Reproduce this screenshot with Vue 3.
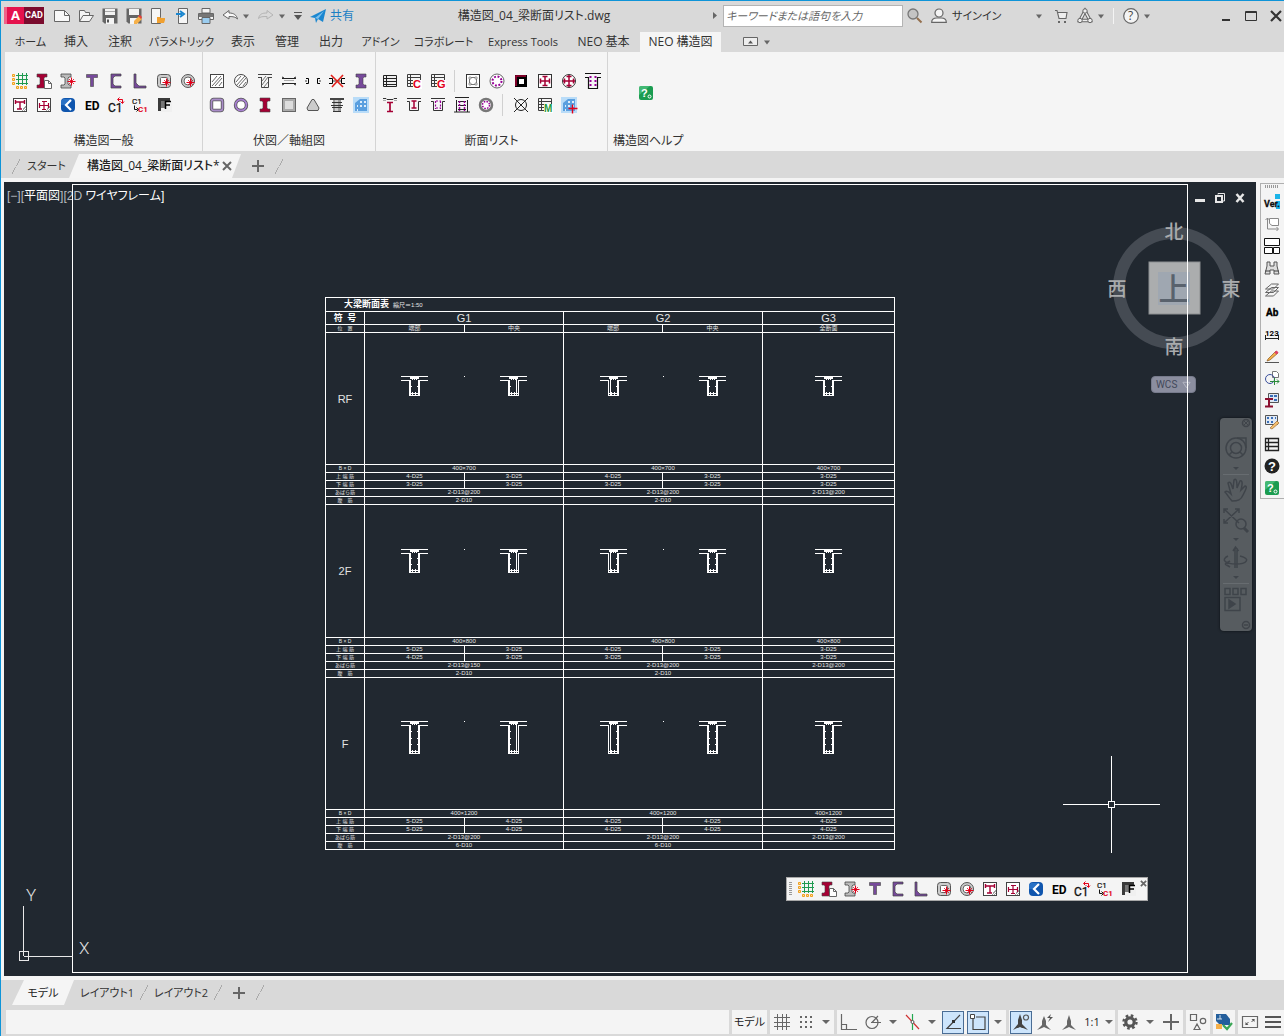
<script setup>
import { ref } from 'vue'

const M = '#a50034'
const P = '#76499a'

const steel = (c) => `<path d="M3 1h10v3h-2l-1 1v6l1 1h2v3H3v-3h2l1-1V5L5 4H3z" fill="${c}" stroke="#444" stroke-width=".6"/>`
const star = (x, y) => `<path d="M${x - 4} ${y}h8M${x} ${y - 4}v8" stroke="#e2001a"/><path d="M${x - 2.5} ${y - 2.5}l5 5M${x + 2.5} ${y - 2.5}l-5 5" stroke="#e2001a" stroke-width=".8"/>`
const listBase = '<path d="M1.5 1.5h13v12h-13zM1.5 4.5h13M1.5 7.5h13M1.5 10.5h13M4.5 1.5v12" fill="none" stroke="#3c3c3c"/>'
const hatch = '<path d="M3 9l5-6M3 13l9-10M6 13l7-8M10 13l3-4" stroke="#555" stroke-width=".9"/>'
const letter = (t, c, x = 7, y = 15, s = 11) => `<text x="${x}" y="${y}" font-size="${s}" font-weight="700" font-family="Liberation Sans, sans-serif" fill="${c}">${t}</text>`
const building = '<path d="M0 0h16v16H0z" fill="#b9dcf8"/><path d="M2 6l5-4h7v12H2z" fill="#5a9fdf"/><path d="M7 4h2v2H7zm4 0h2v2h-2zM7 8h2v2H7zm4 0h2v2h-2zM4 8h1v2H4zm0 4h1v2H4z" fill="#fff" fill-opacity=".8"/>'

const icons = {
  grid: '<path d="M4 2.5h12M4 6.500h12M4 10.500h12M6.500 0v12M10.500 0v12M14.500 0v12" stroke="#1f9a50"/><path d="M.5 1.500h2v2h-2zM.5 5.500h2v2h-2zM.5 9.500h2v2h-2zM4.500 13.500h2v2h-2zM8.500 13.500h2v2h-2zM12.500 13.500h2v2h-2z" fill="#ffe0a0" stroke="#f0a020"/>',
  steelDoc: '<path d="M1 1h10v3H9L8 5v6l1 1h2v3H1v-3h2l1-1V5L3 4H1z" fill="#a50034" stroke="#444" stroke-width=".6"/><path d="M8.500 7.500h4l3 3v5h-7z" fill="#fff" stroke="#666"/><path d="M12.500 7.500v3h3" fill="none" stroke="#666"/>',
  steelStar: '<path d="M1 1h10v3H9L8 5v6l1 1h2v3H1v-3h3l1-1V5L4 4H1z" fill="#bbb" stroke="#444" stroke-width=".8"/>' + star(11.5, 8.5),
  tee: `<path d="M2.500 1.500h11v3h-3l-1 1v8h-3v-8l-1-1h-3z" fill="${P}" stroke="#555" stroke-width=".7"/>`,
  channel: `<path d="M3 1h10v2H7L5 5v6l2 2h6v2H3z" fill="${P}" stroke="#444" stroke-width=".7"/>`,
  angle: `<path d="M2 1h2v9l3 3h7v2H2z" fill="${P}" stroke="#444" stroke-width=".7"/>`,
  boxStar: '<rect x="1.500" y="1.500" width="13" height="13" rx="3" fill="#ccc" stroke="#555"/><rect x="4.500" y="4.500" width="7" height="7" rx="1" fill="#fff" stroke="#666"/>' + star(10.5, 9.5),
  pipeStar: '<circle cx="8" cy="8" r="6.500" fill="#ccc" stroke="#555"/><circle cx="8" cy="8" r="4" fill="#fff" stroke="#666"/>' + star(10.5, 9.5),
  secT: `<rect x="1.500" y="1.500" width="13" height="13" fill="#fff" stroke="#444"/><path d="M10 14l4-4M12 14l2-2M11 12l3-3" stroke="#888" stroke-width=".8"/><path d="M3.500 3v4M12.500 3v4M3 5h10M8 5v7M5 12h5" fill="none" stroke="${M}" stroke-width="1.400"/>`,
  secCross: `<rect x="1.500" y="1.500" width="13" height="13" fill="#fff" stroke="#444"/><path d="M10 14l4-4M12 14l2-2M11 12l3-3" stroke="#888" stroke-width=".8"/><path d="M3.500 6v5M12.500 6v5M3 8.500h10M8 4v9M6 4.500h5M6 12.500h4" fill="none" stroke="${M}" stroke-width="1.200"/>`,
  back: '<rect x="1" y="1" width="14" height="14" rx="4" fill="#0f55ad"/><path d="M3 2h9l-5 6H1V4z" fill="#3b84d6" opacity=".6"/><path d="M11 3L6 8l5 5" fill="none" stroke="#fff" stroke-width="2.200"/>',
  ed: '<text x="1" y="13" font-size="12" font-weight="700" font-family="Roboto, sans-serif" fill="#000">ED</text>',
  c1: '<text x="0" y="15" font-size="12" font-family="Roboto, sans-serif" fill="#111" stroke="#111" stroke-width=".3">C1</text><path d="M10 2.500h4.500V6M12.500 4.500l2 2 1.500-2M11.500.5l-2 2 2 2" fill="none" stroke="#e2001a"/>',
  c1c1: '<text x="0" y="7" font-size="8" font-family="Roboto, sans-serif" fill="#111" stroke="#111" stroke-width=".2">C1</text><path d="M2.500 8.500v4h3M4.500 10.500l2 2-2 2" fill="none" stroke="#111"/><text x="6" y="15" font-size="8" font-weight="700" font-family="Roboto, sans-serif" fill="#e2001a">C1</text>',
  flag: '<path d="M2 1h12v10H2z" fill="#777"/><path d="M2 1h12v3H2zM2 4h3v10H2z" fill="#3a3a3a"/><path d="M9 4h7v11H5v-4h4z" fill="#f0f0f0"/><path d="M9.500 12V4.500H15M9.500 8H14" fill="none" stroke="#000" stroke-width="1.500"/>',
  hatchSq: '<rect x="1.500" y="1.500" width="13" height="13" fill="#fff" stroke="#444"/>' + hatch,
  hatchCircle: '<circle cx="8" cy="8" r="6.500" fill="#fff" stroke="#444"/>' + hatch,
  hatchT: '<path d="M1 1.500h14M4.500 4v10.500h7V4M1 4.500h3.500M11.500 4.500H15" fill="none" stroke="#444"/><path d="M5 8l4-5M5 12l6-8M7 14l4-5" stroke="#666" stroke-width=".9"/>',
  beam: '<path d="M1 5.500h14M1 10.500h14" stroke="#222"/><path d="M3 7.500h10" stroke="#aaa"/><path d="M1 4l2 1M15 4l-2 1M1 12l2-1M15 12l-2-1" stroke="#222"/>',
  gap: '<path d="M1 5.500h2.500v5H1M15 5.500h-2.500v5H15" fill="none" stroke="#000"/><path d="M0 7h2v2H0zM14 7h2v2h-2z" fill="#999"/>',
  gapX: '<path d="M0 5.500h3.500v5H0M16 5.500h-3.500v5H16" fill="none" stroke="#000"/><path d="M4 7h8v2H4z" fill="#999"/><path d="M2 2l12 12M14 2L3 14" stroke="#e2201a" stroke-width="1.600"/>',
  steelP: steel(P),
  tubeSq: '<rect x="2.500" y="2.500" width="11" height="11" rx="2" fill="#fff" stroke="#555" stroke-width="3.400"/><rect x="2.500" y="2.500" width="11" height="11" rx="2" fill="none" stroke="#a98cc8" stroke-width="1.800"/>',
  tubeRound: '<circle cx="8" cy="8" r="5.500" fill="#fff" stroke="#555" stroke-width="3.400"/><circle cx="8" cy="8" r="5.500" fill="none" stroke="#a77fd0" stroke-width="1.800"/>',
  steelM: steel(M),
  slab: '<rect x="1.500" y="1.500" width="13" height="13" fill="#aaa" stroke="#666"/><rect x="4" y="4" width="8" height="8" fill="#ddd"/>',
  triangle: '<path d="M7 2.500h2L14 11l-1 2.500H3L2 11z" fill="#ccc" stroke="#555"/>',
  pile: '<path d="M1 1h14v2H1z" fill="#444"/><path d="M4 3h8v12H4z" fill="#999"/><path d="M6 3h3v12H6z" fill="#ccc"/><path d="M3 5.500h10M2 8.500h12M3 10.500h10M4 14.500h8" stroke="#333"/>',
  building,
  list: '<path d="M1 2h14v12H1z" fill="#eee"/><path d="M1.500 2.500h13v11h-13zM1.500 5.500h13M1.500 8.500h13M1.500 11.500h13M4.500 2.500v11" fill="none" stroke="#222"/>',
  listC: listBase + '<path d="M7 7h9v9H7z" fill="#fff"/>' + letter('C', '#e2001a'),
  listG: listBase + '<path d="M7 7h9v9H7z" fill="#fff"/>' + letter('G', '#e2001a'),
  listM: listBase + '<path d="M7 7h9v9H7z" fill="#fff"/>' + letter('M', '#1f9a40', 7, 15, 10),
  colSq: '<rect x="1.500" y="1.500" width="13" height="13" fill="#fff" stroke="#333"/><rect x="4.500" y="4.500" width="7" height="7" fill="none" stroke="#777"/><path d="M4 4h2v2H4zM10 4h2v2h-2zM4 10h2v2H4zM10 10h2v2h-2z" fill="#fff" stroke="#777" stroke-width=".7"/>',
  colRound: '<circle cx="8" cy="8" r="7" fill="#fff" stroke="#555" stroke-width=".9"/><circle cx="8" cy="8" r="4.500" fill="none" stroke="#960096" stroke-width="2" stroke-dasharray="1.900 1.634"/>',
  colBox: `<rect x="2" y="2" width="12" height="12" fill="#000"/><path d="M3 13V3h10" fill="none" stroke="${M}" stroke-width="1.500"/><rect x="5.500" y="5.500" width="6" height="6" fill="#fff" stroke="#000"/>`,
  srcSq: `<rect x="1.500" y="1.500" width="13" height="13" fill="#fff" stroke="#333"/><path d="M3 8h10M8 3v10M3.500 5.500v5M12.500 5.500v5M5.500 3.500h5M5.500 12.500h5" stroke="${M}" stroke-width="1.500"/>`,
  srcRound: `<circle cx="8" cy="8" r="6.500" fill="#fff" stroke="#333"/><path d="M2 8h12M8 2v12M3.500 5.500v5M12.500 5.500v5M5.500 3.500h5M5.500 12.500h5" stroke="${M}" stroke-width="1.500"/>`,
  beamDots: '<path d="M0 .5h16M0 4.500h3.500v11h9v-11H16" fill="none" stroke="#111" stroke-width="1.200"/><path d="M5.500 3v11M10.500 3v11" stroke="#960096" stroke-width="2" stroke-dasharray="2 2"/>',
  girderI: `<path d="M1 1.500h3l1 1h6l1-1h3" fill="none" stroke="#333"/><path d="M1 3.500h3M12 3.500h3" stroke="#aaa"/><path d="M5 5.500h6M8 5v9M5 14.500h6" stroke="${M}" stroke-width="1.700"/>`,
  srcBeam: `<path d="M1 1.500h14M1 4.500h2.500v9h9v-9H15" fill="none" stroke="#333"/><path d="M5.500 4h5M8 4v7M5.500 11h5" stroke="${M}" stroke-width="1.500"/>`,
  rcBeam: '<path d="M1 1.500h14M1 4.500h2.500v9h9v-9H15" fill="none" stroke="#333"/><path d="M6 4h5M6 11h5M5.500 4v8M10.500 4v8" stroke="#960096" stroke-width="1.200" stroke-dasharray="2 1.500"/>',
  footBeam: '<path d="M1 .5h14M2.500 3v12M13.500 3v12M0 15h16M4 4.500h8M4 8.500h8M4 12.500h8" fill="none" stroke="#222"/><path d="M5.500 4v10M10.500 4v10" stroke="#960096" stroke-width="1.500" stroke-dasharray="2 1"/>',
  pileRound: '<circle cx="8" cy="8" r="6" fill="#fff" stroke="#777" stroke-width="2.500"/><circle cx="8" cy="8" r="3.500" fill="none" stroke="#960096" stroke-width="1.500" stroke-dasharray="1.600 1.149"/>',
  target: '<circle cx="8" cy="8" r="5.500" fill="none" stroke="#222"/><path d="M1 1l14 14M15 1L1 15" stroke="#222"/>',
  buildingPlus: building + '<path d="M7.500 11.500h9M11.500 7.500v9" stroke="#e2001a" stroke-width="1.400"/>',
  help: '<rect x="1" y="1" width="14" height="14" rx="2" fill="#1a9c50"/><path d="M1 3a2 2 0 0 1 2-2h9L1 10z" fill="#5ecb8a" opacity=".6"/><text x="3" y="12" font-size="11" font-weight="700" font-family="Liberation Sans, sans-serif" fill="#fff">?</text><circle cx="11.500" cy="11.500" r="1.500" fill="none" stroke="#fff"/>',
  ver: '<path d="M11 0h5v5h-5z" fill="#1ab4e8"/><path d="M12 7h4v8h-4z" fill="#1ab4e8"/><text x="0" y="13" font-size="9" font-weight="700" font-family="Roboto, sans-serif" fill="#111" stroke="#111" stroke-width=".3">Ver.</text>',
  copyFrame: '<path d="M3.500 2v11H14M1.500 4l2-2 2 2M12.500 11l2 2-2 2" fill="none" stroke="#888"/><path d="M5.500 2.500h9v7H8l-2.500-2z" fill="#fff" stroke="#888"/>',
  layout: '<path d="M.5.500h15v7H.5zM.5 9.500h8v6h-8zM9.500 9.500h6v6h-6z" fill="#fff" stroke="#111"/>',
  find: '<path d="M3 2h3v4h4V2h3v4l2 8h-5v-4H6v4H1l2-8z" fill="#ddd" stroke="#555"/><path d="M1 11h5M10 11h5" stroke="#444"/>',
  layers: '<path d="M1.500 14h8l5-5h-7zM1.500 10.500h8l5-5h-7zM1.500 7h8l5-5h-7z" fill="#f4f4f4" stroke="#666"/>',
  ab: '<text x="2" y="12" font-size="10" font-weight="700" font-family="Roboto, sans-serif" fill="#000" stroke="#000" stroke-width=".3">Ab</text>',
  dim: '<text x="1" y="10" font-size="8" font-weight="700" font-family="Roboto, sans-serif" fill="#000">123</text><path d="M1.500 9v5M14.500 9v5M1 12.500h14" stroke="#222"/>',
  pencil: '<path d="M1 14.500h14" stroke="#555"/><path d="M4 11l8-8 2 2-8 7-3 1z" fill="#f3b04c" stroke="#8a5a20" stroke-width=".7"/><path d="M11.500 3.500l2 2" stroke="#e0406a" stroke-width="3"/>',
  convert: '<path d="M8.500 1.500h4l2 2v4h-6z" fill="#fff" stroke="#777"/><circle cx="6" cy="9" r="4.500" fill="none" stroke="#3a4f9c"/><path d="M6 11.500h9M10.500 8v7M13 9.500l2 2-2 2" fill="none" stroke="#2a8a3a"/>',
  steelTable: '<path d="M4.500 1.500h10v9h-10z" fill="#dfe8f4" stroke="#555"/><path d="M6 3h3v2H6zM10 3h3v2h-3zM10 7h3v2h-3z" fill="#3a6fb8"/><path d="M1 7h8M5 7v7M1 14.500h8" stroke="#8c1030" stroke-width="2"/>',
  editTable: '<path d="M1.500 1.500h12v9h-12z" fill="#dfe8f4" stroke="#555"/><path d="M3 3h2v2H3zM7 3h2v2H7zM11 3h1v2h-1zM3 7h2v2H3zM7 7h2v2H7z" fill="#3a6fb8"/><path d="M6 14l7-7 2 2-7 6z" fill="#f6c070" stroke="#9a6a30" stroke-width=".7"/>',
  sheet: '<path d="M1.500 2.500h13v12h-13zM1.500 6.500h13M1.500 10.500h13M4.500 2.500v12" fill="none" stroke="#222" stroke-width="1.300"/>',
  helpRound: '<circle cx="8" cy="8" r="7.500" fill="#222"/><text x="4" y="13" font-size="13" font-weight="700" font-family="Liberation Sans, sans-serif" fill="#fff">?</text>',

  new: '<path d="M.5 2.500h10l5 5v6H.5z" fill="#f8f8f8" stroke="#666"/><path d="M10.500 2.500v5h5" fill="none" stroke="#666"/>',
  open: '<path d="M1.500 13.500v-11h5l1 2h4v3M1.500 13.500L5 7.500h10.500l-4 6z" fill="#f4f4f4" stroke="#666"/>',
  save: '<path d="M.5.500h15v15h-13l-2-2z" fill="#666"/><path d="M3 1h10v6H3zM4 10h8v6H4z" fill="#f4f4f4"/><path d="M5 11.500h2v3H5z" fill="#555"/><path d="M3 3.500h10" stroke="#aaa"/>',
  saveAs: '<path d="M.5.500h15v15h-13l-2-2z" fill="#666"/><path d="M3 1h10v6H3zM4 10h8v6H4z" fill="#f4f4f4"/><path d="M8 13l5-5 3 3-5 5H8z" fill="#f5b04a"/><path d="M12 8l2-1 2 2-1 2z" fill="#e5403a"/>',
  openWeb: '<path d="M1.500.500h9v15h-9z" fill="#f6f6f6" stroke="#666"/><path d="M7 15V9h3l1 1h4v2l-1 3z" fill="#f0a030"/>',
  saveWeb: '<path d="M4.500.500h9v15h-9z" fill="#f6f6f6" stroke="#666"/><path d="M2 6h6M6 3l4 3-4 3" fill="none" stroke="#1b87d0" stroke-width="2"/>',
  print: '<path d="M4 .5h8V5H4zM.5 5.500h15v6H.5z" fill="#f4f4f4" stroke="#666"/><path d="M1 6h14v3H1z" fill="#777"/><path d="M4 9.500h8v6H4z" fill="#9bcdf0" stroke="#666"/>',
  undo: '<path d="M1 7l6-4.500V5c5 0 7.500 2 8.500 6-2-2-4-2.500-8.500-2.500V11z" fill="#f8f8f8" stroke="#666"/>',
  redo: '<path d="M15 7L9 2.500V5C4 5 1.500 6 .5 10.500c2-2 4-2 8.500-2V11z" fill="none" stroke="#b4b4b4"/>',
  plane: '<path d="M0 9L16 1l-3 13-5-3-2 4-1-5z" fill="#1b87d0"/><path d="M5 10l9-7-6 8" fill="#7cc0ee"/>',
  search: '<circle cx="6" cy="6" r="5" fill="#c4c4c4" stroke="#777" stroke-width="1.300"/><path d="M10 10l4.500 4.500" stroke="#94704e" stroke-width="2"/>',
  user: '<circle cx="8" cy="5" r="4" fill="#f4f4f4" stroke="#666" stroke-width="1.200"/><path d="M.7 14.300c0-3 2-4.300 5-4.300h4.600c3 0 5 1.300 5 4.300z" fill="#f4f4f4" stroke="#666" stroke-width="1.200"/>',
  cart: '<path d="M2 2.500h2l2 8h7l1-6H5" fill="#eee" stroke="#666" stroke-width="1.100"/><path d="M5 13h2v2H5zM11 13h2v2h-2z" fill="#666"/>',
  a360: '<path d="M8 3L3 12.500h10z" fill="none" stroke="#666" stroke-width="3.500"/><path d="M8 3L3 12.500h10z" fill="none" stroke="#eee" stroke-width="1.500"/><circle cx="8" cy="3" r="2.200" fill="#eee" stroke="#666"/><circle cx="3" cy="12.500" r="2.200" fill="#eee" stroke="#666"/><circle cx="13" cy="12.500" r="2.200" fill="#eee" stroke="#666"/>',
  helpLine: '<circle cx="8" cy="8" r="7.300" fill="#f4f4f4" stroke="#666" stroke-width="1.200"/><text x="5" y="12" font-size="12" font-family="Open Sans, sans-serif" fill="#444">?</text>',
  minimize: '<path d="M4 12h8" stroke="#333" stroke-width="2"/>',
  maximize: '<path d="M2.500 3.500h11v9h-11zM2 4.500h12" fill="none" stroke="#333"/>',
  close: '<path d="M3 3l10 10M13 3L3 13" stroke="#333" stroke-width="2.200"/>',
  caret: '<path d="M5 6.500h6l-3 4z" fill="#666"/>',
  caretWide: '<path d="M4 6h8l-4 4z" fill="#666"/>',
  customize: '<path d="M4 4.500h8" stroke="#555"/><path d="M4 7h8l-4 5z" fill="#555"/>',
  caretRight: '<path d="M6 4v7l4-3.500z" fill="#666"/>',
  panel: '<path d="M.5 3.500h14v8H.5z" fill="#eee" stroke="#666"/><path d="M5 9.500h5l-2.500-3z" fill="#555"/>',

  gridLines: '<path d="M0 3.500h16M0 8.500h16M0 12.500h16M3.500 0v16M8.500 0v16M12.500 0v16" stroke="#666"/>',
  dots: '<path d="M2 2h2v2H2zM7 2h2v2H7zM12 2h2v2h-2zM2 7h2v2H2zM7 7h2v2H7zM12 7h2v2h-2zM2 12h2v2H2zM7 12h2v2H7zM12 12h2v2h-2z" fill="#666"/>',
  ortho: '<path d="M.5 0v15.500H16M.5 10.500h5v5" fill="none" stroke="#666" stroke-width="1.200"/>',
  polar: '<circle cx="7" cy="8.500" r="6" fill="none" stroke="#666" stroke-width="1.200"/><path d="M6 8.500h10M7 8.500L13 2" stroke="#666" stroke-width="1.200"/>',
  iso: '<path d="M8.500 0v16" stroke="#23a850" stroke-width="1.200"/><path d="M2 1l13 14" stroke="#d03030" stroke-width="1.200"/><circle cx="8.500" cy="8" r="1.500" fill="#fff" stroke="#555"/>',
  track: '<path d="M15 1L2 14.500h14" fill="none" stroke="#444" stroke-width="1.200"/><path d="M7 6h3v3H7z" fill="#333"/>',
  osnap: '<path d="M3 5v10.500h12V3H6" fill="none" stroke="#444" stroke-width="1.200"/><path d="M.5.500h4v4h-4z" fill="#fff" stroke="#444"/>',
  annoVis: '<path d="M7 0l2 6v4l6 6-5-2H9l-2-1-2 1H4l-4 2 5-6V6z" fill="#444"/><circle cx="13" cy="3.500" r="2.500" fill="none" stroke="#555" stroke-width="1.200"/>',
  annoAuto: '<path d="M7 2l2 5v4l5 5-5-2-2-1-2 1-5 2 5-5V7z" fill="#666"/><path d="M14 0l-4 4h3l-2 4 5-5h-3z" fill="#555"/>',
  anno: '<path d="M8 1l2 6v4l5 5-5-2-2-1-2 1-5 2 5-5V7z" fill="#666"/>',
  gear: '<circle cx="8" cy="8" r="4.200" fill="none" stroke="#555" stroke-width="3.200"/><circle cx="8" cy="8" r="6.500" fill="none" stroke="#555" stroke-width="2.400" stroke-dasharray="2.600 2.500"/>',
  plus: '<path d="M0 8h16M8 0v16" stroke="#666" stroke-width="2"/>',
  shapes: '<path d="M.5 .5h6v6h-6zM4 15.500l3-5.500 3 5.500z" fill="none" stroke="#666" stroke-width="1.200"/><circle cx="13" cy="7" r="2.700" fill="none" stroke="#666" stroke-width="1.200"/>',
  hardware: '<path d="M0 0h10l4 5v6H4L0 7z" fill="#245f9c"/><path d="M1 5h5M4 1v4" stroke="#fff" stroke-width=".8"/><path d="M0 10h6v5H0z" fill="#f5b04a"/><path d="M7 11l4 4 5-6" fill="none" stroke="#3aa655" stroke-width="2.200"/>',
  full: '<path d="M.5 2.500h15v11H.5z" fill="none" stroke="#666" stroke-width="1.200"/><path d="M9.500 5h3v3zM6.500 11h-3V8z" fill="#555"/><path d="M12 5.500L9.500 8M4 10.500L6.500 8" stroke="#555"/>',
  menu: '<path d="M0 3h16M0 8h16M0 13h16" stroke="#555" stroke-width="2"/>',
}

const general = [
  ['grid', '通り芯'], ['steelDoc', '鉄骨登録'], ['steelStar', '鉄骨配置'], ['tee', 'T形鋼'], ['channel', '溝形鋼'],
  ['angle', '山形鋼'], ['boxStar', '角形鋼管'], ['pipeStar', '鋼管'], ['secT', 'T断面'], ['secCross', '十字断面'],
  ['back', '戻る'], ['ed', '編集'], ['c1', '符号'], ['c1c1', '符号変更'], ['flag', '旗'],
]
const groups = [
  { title: '構造図一般', width: 197, rows: [general.slice(0, 8), general.slice(8)] },
  {
    title: '伏図／軸組図', width: 172, rows: [
      [['hatchSq', '角柱'], ['hatchCircle', '円柱'], ['hatchT', '梁断面'], ['beam', '梁'], ['gap', '継手'], ['gapX', '継手削除'], ['steelP', 'H形鋼']],
      [['tubeSq', '角形管'], ['tubeRound', '円形管'], ['steelM', '鉄骨柱'], ['slab', '基礎'], ['triangle', '三角基礎'], ['pile', '杭'], ['building', '建物']],
    ],
  },
  {
    title: '断面リスト', width: 231, rows: [
      [['list', 'リスト'], ['listC', '柱リスト'], ['listG', '梁リスト'], null, ['colSq', 'RC柱'], ['colRound', 'RC円柱'], ['colBox', 'S柱'], ['srcSq', 'SRC柱'], ['srcRound', 'SRC円柱'], ['beamDots', 'RC大梁']],
      [['girderI', 'S梁'], ['srcBeam', 'SRC梁'], ['rcBeam', 'RC梁'], ['footBeam', '基礎梁'], ['pileRound', '杭断面'], null, ['target', '基点'], ['listM', '部材表'], ['buildingPlus', '建物追加']],
    ],
  },
]

const menus = [
  ['ホーム', 47], ['挿入', 44], ['注釈', 44], ['パラメトリック', 79], ['表示', 44], ['管理', 44], ['出力', 44],
  ['アドイン', 55], ['コラボレート', 71], ['Express Tools', 88], ['NEO 基本', 73], ['NEO 構造図', 81],
]
const hasKanji = (s) => /[\u4e00-\u9fff]/.test(s)

const sideTools = [
  ['ver', 'バージョン'], ['copyFrame', '図枠複写'], ['layout', 'レイアウト'], ['find', '検索'], ['layers', '画層'], ['ab', '文字'],
  ['dim', '寸法'], ['pencil', '修正'], ['convert', '変換'], ['steelTable', '鋼材表'], ['editTable', '表編集'], ['sheet', '表'],
  ['helpRound', '情報'], ['help', 'ヘルプ'],
]

const status = [
  [{ text: 'モデル', w: 35 }],
  [{ i: 'gridLines', w: 24 }, { i: 'dots', w: 24 }, { i: 'caretWide', w: 16 }],
  [{ i: 'ortho', w: 24 }, { i: 'polar', w: 24 }, { i: 'caretWide', w: 15 }, { i: 'iso', w: 24 }, { i: 'caretWide', w: 16 }, { i: 'track', w: 26, on: true }, { i: 'osnap', w: 24, on: true }, { i: 'caretWide', w: 16 }],
  [{ i: 'annoVis', w: 24, on: true }, { i: 'annoAuto', w: 24 }, { i: 'anno', w: 24 }, { text: '1:1', w: 22 }, { i: 'caretWide', w: 12 }],
  [{ i: 'gear', w: 24 }, { i: 'caretWide', w: 16 }, { i: 'plus', w: 25 }],
  [{ i: 'shapes', w: 24 }],
  [{ i: 'hardware', w: 22 }],
  [{ i: 'full', w: 24 }, { i: 'menu', w: 22 }],
]

const floors = [
  { name: 'RF', high: 132, depth: 20, ribs: 1, size: '400×700', top: ['4-D25', '3-D25', '4-D25', '3-D25', '3-D25'], bottom: ['3-D25', '3-D25', '3-D25', '3-D25', '3-D25'], hoop: ['2-D13@200', '2-D13@200', '2-D13@200'], web: '2-D10' },
  { name: '2F', high: 133, depth: 24, ribs: 2, size: '400×800', top: ['5-D25', '3-D25', '4-D25', '3-D25', '3-D25'], bottom: ['4-D25', '3-D25', '3-D25', '3-D25', '3-D25'], hoop: ['2-D13@150', '2-D13@200', '2-D13@200'], web: '2-D10' },
  { name: 'F', high: 132, depth: 33, ribs: 3, size: '400×1200', top: ['5-D25', '4-D25', '4-D25', '4-D25', '4-D25'], bottom: ['5-D25', '4-D25', '4-D25', '4-D25', '4-D25'], hoop: ['2-D13@200', '2-D13@200', '2-D13@200'], web: '6-D10' },
]

const box = (x, y, w, h) => `M${x} ${y}h${w}v${h}h${-w}z`
function section(c, depth, ribs, side) {
  const y = 43
  const out = [
    box(c - 13, y, 27, 1), box(c - 13, y + 4, 8, 1), box(c + 6, y + 4, 8, 1), box(c - 4, y + 1, 9, 2),
    box(c - 5, y + depth - 1, 11, 1), box(c - 5, y + depth - 3, 11, 1),
    box(c - 2, y + depth - 4, 1, 3), box(c + 1, y + depth - 4, 1, 3),
    box(c - 2, y + 3, 1, 1), box(c, y + 3, 1, 1), box(c + 2, y + 3, 1, 1),
  ]
  out.push(side === 'left' ? box(c - 5, y + 4, 1, depth - 4) + box(c - 3, y + 2, 1, depth - 3) : box(c - 5, y + 4, 2, depth - 4))
  out.push(side === 'right' ? box(c + 5, y + 4, 1, depth - 4) + box(c + 3, y + 2, 1, depth - 3) : box(c + 4, y + 4, 2, depth - 4))
  for (let n = 1; n <= ribs; n++) {
    const ry = y + 3 + Math.round((n * (depth - 6)) / (ribs + 1))
    out.push(box(c - 3, ry, 1, 1), box(c + 3, ry, 1, 1))
  }
  return out.join('')
}

const menu = ref('NEO 構造図')
const keyword = ref('')
</script>

<template>
  <div class="app">
    <header class="title-bar">
      <div class="logo"><b>A</b><span>CAD</span></div>
      <nav class="quick">
        <button v-for="n in ['new', 'open', 'save', 'saveAs', 'openWeb', 'saveWeb', 'print', 'undo']" :key="n" class="ico" :aria-label="n"><svg viewBox="0 0 16 16" v-html="icons[n]" /></button>
      </nav>
      <button class="ico" aria-label="元に戻す履歴"><svg viewBox="0 0 16 16" v-html="icons.caret" /></button>
      <button class="ico redo" aria-label="やり直し"><svg viewBox="0 0 16 16" v-html="icons.redo" /></button>
      <button class="ico" aria-label="やり直し履歴"><svg viewBox="0 0 16 16" v-html="icons.caret" /></button>
      <button class="ico" aria-label="カスタマイズ"><svg viewBox="0 0 16 16" v-html="icons.customize" /></button>
      <button class="share"><svg viewBox="0 0 16 16" v-html="icons.plane" />共有</button>
      <h1>構造図_04_梁断面リスト.dwg</h1>
      <button class="ico" aria-label="検索を展開"><svg viewBox="0 0 16 16" v-html="icons.caretRight" /></button>
      <input v-model="keyword" type="text" class="search" placeholder="キーワードまたは語句を入力" aria-label="検索">
      <button class="ico find" aria-label="検索"><svg viewBox="0 0 16 16" v-html="icons.search" /></button>
      <button class="signin"><svg viewBox="0 0 16 16" v-html="icons.user" /><span>サインイン</span><svg viewBox="0 0 16 16" v-html="icons.caret" /></button>
      <button class="ico cart" aria-label="ストア"><svg viewBox="0 0 16 16" v-html="icons.cart" /></button>
      <button class="ico cloud" aria-label="クラウド"><svg viewBox="0 0 16 16" v-html="icons.a360" /></button>
      <button class="ico cloud-menu" aria-label="クラウドメニュー"><svg viewBox="0 0 16 16" v-html="icons.caret" /></button>
      <button class="ico about" aria-label="ヘルプ"><svg viewBox="0 0 16 16" v-html="icons.helpLine" /></button>
      <button class="ico" aria-label="ヘルプメニュー"><svg viewBox="0 0 16 16" v-html="icons.caret" /></button>
      <div class="window-buttons">
        <button v-for="n in ['minimize', 'maximize', 'close']" :key="n" class="ico" :aria-label="n"><svg viewBox="0 0 16 16" v-html="icons[n]" /></button>
      </div>
    </header>

    <nav class="menu-bar">
      <button v-for="[name, w] in menus" :key="name" :class="{ active: menu === name, kanji: hasKanji(name) }" :style="{ width: w + 'px' }" @click="menu = name">{{ name }}</button>
      <button class="panel-toggle" aria-label="パネル表示"><svg viewBox="0 0 16 16" v-html="icons.panel" /><svg viewBox="0 0 16 16" v-html="icons.caret" /></button>
    </nav>

    <section class="ribbon">
      <div v-for="g in groups" :key="g.title" class="group" :style="{ width: g.width + 'px' }">
        <div class="tools">
          <div v-for="(row, r) in g.rows" :key="r" class="tool-row">
            <template v-for="(t, n) in row" :key="n">
              <button v-if="t" class="ico" :aria-label="t[1]"><svg viewBox="0 0 16 16" v-html="icons[t[0]]" /></button>
              <i v-else class="split" />
            </template>
          </div>
        </div>
        <p>{{ g.title }}</p>
      </div>
      <div class="group help-group">
        <div class="tools"><button class="ico" aria-label="構造図ヘルプ"><svg viewBox="0 0 16 16" v-html="icons.help" /></button></div>
        <p>構造図ヘルプ</p>
      </div>
    </section>

    <nav class="file-tabs">
      <i class="slash" />
      <button class="start">スタート</button>
      <div class="file-active"><span>構造図_04_梁断面リスト*</span><button aria-label="閉じる"><svg viewBox="0 0 10 10"><path d="M1 1l8 8M9 1L1 9" stroke="#666" stroke-width="2" /></svg></button></div>
      <button class="add" aria-label="新しい図面"><svg viewBox="0 0 12 12"><path d="M0 6h12M6 0v12" stroke="#666" stroke-width="2" /></svg></button>
      <i class="slash" />
    </nav>

    <main class="workspace">
      <div class="canvas">
        <p class="view-label"><span>[−]</span><span>[</span>平面図<span>][2D</span> ワイヤフレーム]</p>

        <svg class="cube" viewBox="0 0 140 140">
          <circle cx="70" cy="70" r="55" fill="none" stroke="#454b53" stroke-width="12" />
          <rect x="43" y="42" width="55" height="56" fill="#20262d" opacity=".5" />
          <rect x="45" y="44" width="51" height="52" fill="#abadae" stroke="#8c8f91" />
          <rect x="54" y="54" width="32" height="33" fill="#9fa7b1" />
          <text x="70" y="82" class="face">上</text>
          <text x="70" y="21">北</text><text x="13" y="78">西</text><text x="127" y="78">東</text><text x="70" y="136">南</text>
        </svg>
        <button class="wcs">WCS<svg viewBox="0 0 10 8"><path d="M1 1h8L5 7z" fill="none" stroke="#b8bac6" /></svg></button>

        <div class="frame" />

        <div class="view-buttons">
          <button aria-label="最小化"><svg viewBox="0 0 12 12"><path d="M1 8.500h10" stroke="#e6e6e6" stroke-width="3" /></svg></button>
          <button aria-label="元のサイズ"><svg viewBox="0 0 12 12"><path d="M4 2.500V1.500h6.500V9H9" fill="none" stroke="#e6e6e6" /><path d="M2 4h6v6H2z" fill="none" stroke="#e6e6e6" stroke-width="2" /></svg></button>
          <button aria-label="図面を閉じる"><svg viewBox="0 0 12 12"><path d="M2.500 2l7 8M9.500 2l-7 8" stroke="#e6e6e6" stroke-width="2.500" /></svg></button>
        </div>

        <table class="beams">
          <colgroup><col class="c0"><col class="ca"><col class="cb"><col class="cb"><col class="ca"><col class="cc"></colgroup>
          <tbody>
            <tr class="caption"><td colspan="6"><b>大梁断面表</b><small>縮尺＝1:50</small></td></tr>
            <tr class="marks"><th>符&ensp;号</th><td colspan="2">G1</td><td colspan="2">G2</td><td>G3</td></tr>
            <tr><th>位&emsp;置</th><td>端部</td><td>中央</td><td>端部</td><td>中央</td><td>全断面</td></tr>
            <template v-for="f in floors" :key="f.name">
              <tr class="drawing">
                <td :style="{ height: f.high + 'px' }">{{ f.name }}</td>
                <td v-for="side in ['right', 'left']" :key="side" colspan="2">
                  <svg width="198" height="131" viewBox="0 0 198 131" shape-rendering="crispEdges">
                    <path :d="section(49, f.depth, f.ribs, side === 'left' ? 'left' : '') + section(148, f.depth, f.ribs, side === 'right' ? 'right' : '') + box(99, 43, 1, 1)" fill="#fff" />
                  </svg>
                </td>
                <td><svg width="131" height="131" viewBox="0 0 131 131" shape-rendering="crispEdges"><path :d="section(65, f.depth, f.ribs, '')" fill="#fff" /></svg></td>
              </tr>
              <tr><th>B × D</th><td colspan="2">{{ f.size }}</td><td colspan="2">{{ f.size }}</td><td>{{ f.size }}</td></tr>
              <tr><th>上 端 筋</th><td v-for="(v, n) in f.top" :key="n">{{ v }}</td></tr>
              <tr><th>下 端 筋</th><td v-for="(v, n) in f.bottom" :key="n">{{ v }}</td></tr>
              <tr><th>あばら筋</th><td colspan="2">{{ f.hoop[0] }}</td><td colspan="2">{{ f.hoop[1] }}</td><td>{{ f.hoop[2] }}</td></tr>
              <tr><th>腹&emsp;筋</th><td colspan="2">{{ f.web }}</td><td colspan="2">{{ f.web }}</td><td /></tr>
            </template>
          </tbody>
        </table>

        <svg class="cursor" viewBox="0 0 97 97" shape-rendering="crispEdges"><path d="M0 48.500h45M52 48.500h45M48.500 0v45M48.500 52v45M45.500 45.500h6v6h-6z" fill="none" stroke="#fff" /></svg>
        <svg class="ucs" viewBox="0 0 80 80"><path d="M5.500 19v50M5.500 69.500h49M1.500 64.500h9v9h-9z" fill="none" stroke="#e8e8e8" shape-rendering="crispEdges" /><text x="8" y="14">Y</text><text x="61" y="67">X</text></svg>

        <div class="nav-bar">
          <svg viewBox="0 0 32 213" fill="none" stroke="#3f444a" stroke-width="1.500">
            <circle cx="26" cy="5" r="3.500" /><path d="M24 3l4 4M28 3l-4 4" stroke-width="1" />
            <circle cx="16" cy="30" r="10" /><path d="M17 20h9v10" /><circle cx="16" cy="30" r="5.500" /><path d="M9 37l3-3M23 37l-3-3" />
            <path d="M13 49h6l-3 3z" fill="#3f444a" stroke="none" /><path d="M3 56.500h26" stroke="#676c70" stroke-width="1" />
            <path d="M12 83c-3-3-5-7-7-9 2-2 4 0 6 2L8 65c2-2 3 0 5 6l1-9c2-2 3 0 3 8l3-7c2-1 3 1 1 9l4-4c3 0 0 5-2 9-2 5-5 6-11 6z" />
            <path d="M4 91l15 14M19 91L4 105M4 95v-4h4M15 91h4v4M4 101v4h4" /><circle cx="21" cy="106" r="5" /><path d="M24 110l4 4" stroke-width="3" />
            <path d="M13 120h6l-3 3z" fill="#3f444a" stroke="none" />
            <path d="M15 130v20M13 133l2.500-4 3 4M17 130v20M8 138c-8 4-2 8 8 8s16-5 4-8M5 146l5-3M5 146l5 3" />
            <path d="M13 158h6l-3 3z" fill="#3f444a" stroke="none" /><path d="M3 165.500h26" stroke="#676c70" stroke-width="1" />
            <path d="M5 170.500h5v6H5zM13 170.500h5v6h-5zM21 170.500h5v6h-5zM5 179.500h15v13H5z" /><path d="M9 182v8l6-4z" fill="#3f444a" />
            <circle cx="26" cy="207" r="3.500" /><path d="M24 207h4" />
          </svg>
        </div>

        <div class="float-bar">
          <i class="grip" />
          <button v-for="t in general" :key="t[0]" class="ico" :aria-label="t[1]"><svg viewBox="0 0 16 16" v-html="icons[t[0]]" /></button>
          <button class="float-close" aria-label="ツールバーを閉じる"><svg viewBox="0 0 8 8"><path d="M1 1l6 6M7 1L1 7" stroke="#666" stroke-width="2" /></svg></button>
        </div>
      </div>
      <aside class="side">
        <div class="side-bar">
          <i class="grip-h" />
          <button v-for="t in sideTools" :key="t[0]" class="ico" :aria-label="t[1]"><svg viewBox="0 0 16 16" v-html="icons[t[0]]" /></button>
        </div>
      </aside>
    </main>

    <nav class="layout-tabs">
      <button class="model">モデル</button>
      <button class="sheet-tab">レイアウト1</button><i class="slash" />
      <button class="sheet-tab">レイアウト2</button><i class="slash" />
      <button class="add" aria-label="新しいレイアウト"><svg viewBox="0 0 12 12"><path d="M0 6h12M6 0v12" stroke="#666" stroke-width="2" /></svg></button><i class="slash" />
    </nav>

    <footer class="status">
      <div class="command" />
      <div v-for="(seg, s) in status" :key="s" class="segment">
        <button v-for="(b, n) in seg" :key="n" :aria-label="b.text || b.i" :style="{ width: b.w + 'px' }">
          <template v-if="b.text">{{ b.text }}</template>
          <span v-else :class="{ on: b.on }"><svg viewBox="0 0 16 16" v-html="icons[b.i]" /></span>
        </button>
      </div>
    </footer>
  </div>
</template>

<style>
body { margin: 0; background: #d9d9d9; }
</style>

<style scoped>
* { box-sizing: border-box; }
.app {
  display: flex; flex-direction: column; min-height: 100vh;
  border-top: 1px solid #0e94d8; border-left: 1px solid #0e94d8;
  background: #d9d9d9; color: #333;
  font: 12px/16px "Open Sans", "Noto Sans CJK JP", sans-serif;
  font-feature-settings: "palt"; white-space: nowrap;
}
button { border: 0; padding: 0; margin: 0; background: none; color: inherit; font: inherit; font-feature-settings: inherit; }
p, h1 { margin: 0; font-weight: 400; }
svg { display: block; flex: none; overflow: visible; }
.ico { flex: none; width: 16px; height: 16px; }
.ico svg, .share svg, .signin svg, .panel-toggle svg, .segment svg { width: 16px; height: 16px; }

.title-bar { display: flex; align-items: center; height: 29px; padding-left: 3px; }
.logo { display: flex; align-items: stretch; width: 40px; height: 17px; color: #fff; background: #7a0c2e; }
.logo b { width: 20px; background: #e5124d; text-align: center; font: 700 13px/16px "Open Sans", sans-serif; border-left: 3px solid #ef6288; }
.logo span { flex: 1; text-align: center; font: 700 9px/16px "Roboto", sans-serif; }
.quick { display: flex; gap: 8px; margin-left: 10px; }
.redo { margin-left: 4px; }
.share { display: flex; align-items: center; gap: 4px; margin-left: 4px; color: #1b7fc4; }
h1 { flex: 1; padding-left: 7px; text-align: center; font-size: 12px; line-height: 16px; }
.search { width: 180px; height: 22px; border: 1px solid #b4b4b4; padding: 0 2px; background: #fff; font: italic 11px/16px "Open Sans", "Noto Sans CJK JP", sans-serif; font-feature-settings: "palt"; }
.search::placeholder { color: #666; opacity: 1; }
.find { margin-left: 4px; }
.signin { display: flex; align-items: center; margin-left: 8px; }
.signin span { width: 84px; padding-left: 5px; text-align: left; font-size: 11px; }
.cart { margin-left: 6px; }
.cloud { margin-left: 8px; }
.cloud-menu { width: 21px; margin-right: 4px; border-right: 1px solid #f4f4f4; }
.about { margin-left: 5px; }
.window-buttons { display: flex; gap: 9px; margin-left: 63px; }

.menu-bar { display: flex; height: 22px; padding: 2px 0 0 6px; }
.menu-bar button { flex: none; display: flex; justify-content: center; align-items: center; height: 20px; font-size: 11px; }
.menu-bar .kanji { font-size: 12px; }
.menu-bar .active { background: #f5f5f5; }
.menu-bar .panel-toggle { margin-left: 22px; }

.ribbon { display: flex; height: 99px; margin-left: 4px; background: #f5f5f5; }
.group { flex: none; display: flex; flex-direction: column; align-items: center; padding: 17px 0 2px; border-right: 1px solid #d4d4d4; box-sizing: content-box; height: 80px; }
.tools { flex: 1; align-self: stretch; padding-left: 7px; }
.tool-row { display: flex; align-items: center; gap: 8px; height: 24px; }
.group + .group .tools { padding-left: 6px; }
.split { width: 3px; height: 22px; border-left: 1px solid #d0d0d0; }
.help-group { border: 0; padding-left: 5px; }
.group + .help-group .tools { align-self: center; padding: 16px 4px 0 0; }

.file-tabs, .layout-tabs { display: flex; align-items: center; padding-left: 11px; }
.file-tabs { height: 27px; padding-top: 3px; }
.slash { flex: none; width: 8px; height: 15px; background: linear-gradient(to bottom right, transparent 47%, #aaa 47%, #aaa 53%, transparent 53%); }
.start { width: 59px; padding-right: 6px; font-size: 11px; text-align: center; }
.file-active { display: flex; align-items: center; height: 24px; width: 172px; margin-left: -10px; padding-left: 18px; background: #f5f5f5; clip-path: polygon(10px 0, 100% 0, calc(100% - 9px) 100%, 0 100%); color: #222; }
.file-active span { width: 135px; font-weight: 500; }
.file-active button svg { width: 10px; height: 10px; }
.add { width: 12px; height: 12px; margin: 0 11px; }
.add svg { width: 12px; height: 12px; }

.workspace { flex: 1; display: flex; padding: 4px 0 4px 3px; background: #f4f4f4; min-height: 800px; }
.canvas { flex: 1; position: relative; overflow: hidden; background: #212830; color: #fff; }
.view-label { position: absolute; left: 3px; top: 6px; font-size: 12px; font-family: "Liberation Sans", "Noto Sans CJK JP", sans-serif; }
.view-label span { color: #b8bcc0; }
.frame { position: absolute; inset: 2px 68px 3px; border: 1px solid #fff; pointer-events: none; }
.view-buttons { position: absolute; right: 10px; top: 10px; display: flex; gap: 8px; }
.view-buttons svg { width: 12px; height: 12px; }
.cube { position: absolute; right: 12px; top: 36px; width: 140px; height: 140px; }
.cube text { fill: #a9abad; text-anchor: middle; font: 500 19px "Noto Sans CJK JP", sans-serif; }
.cube .face { fill: #59626d; font-size: 31px; }
.wcs { position: absolute; right: 60px; top: 194px; width: 45px; height: 17px; display: flex; align-items: center; justify-content: space-between; padding: 0 4px; border: 1px solid #777b8c; border-radius: 4px; background: #8b8e9f; color: #42485a; font: 10px/12px "Roboto", sans-serif; }
.wcs svg { width: 9px; height: 8px; }

.beams { position: absolute; left: 321px; top: 115px; width: 570px; table-layout: fixed; border-collapse: separate; border-spacing: 0; border-left: 1px solid #fff; border-top: 1px solid #fff; font: 6px/7px "Liberation Sans", "Noto Sans CJK JP", sans-serif; color: #e4e4e4; text-align: center; }
.beams td, .beams th { height: 8px; padding: 0; border-right: 1px solid #fff; border-bottom: 1px solid #fff; font-weight: 400; vertical-align: middle; overflow: hidden; }
.beams th { font-size: 5px; }
.beams .marks th { font-size: 9px; font-weight: 700; color: #fff; height: 13px; line-height: 12px; }
.beams .marks td { font-size: 11px; height: 13px; line-height: 12px; }
.c0 { width: 39px; }
.ca { width: 100px; }
.cb { width: 99px; }
.cc { width: 132px; }
.beams .caption td { height: 14px; line-height: 12px; text-align: left; padding-left: 18px; }
.caption b { font-size: 9px; color: #fff; }
.caption small { font-size: 6px; margin-left: 4px; }
.beams .drawing td { font-size: 11px; line-height: 12px; }

.cursor { position: absolute; right: 96px; bottom: 123px; width: 97px; height: 97px; }
.ucs { position: absolute; left: 14px; bottom: 9px; width: 80px; height: 80px; }
.ucs text { fill: #e0e0e0; font: 300 17px "Roboto", "Open Sans", sans-serif; }
.nav-bar { position: absolute; right: 4px; top: 236px; width: 32px; height: 213px; border-radius: 4px; background: #575c60; box-shadow: 0 0 2px 1px #171c22; }
.float-bar { position: absolute; right: 108px; bottom: 75px; width: 362px; height: 24px; display: flex; align-items: center; gap: 7px; padding-left: 2px; border: 1px solid #a8a8a8; background: #f4f4f4; }
.grip { width: 3px; height: 14px; margin-right: -1px; background: repeating-linear-gradient(#999 0 1px, transparent 1px 2px); }
.float-close { position: absolute; right: 0; top: 2px; }
.float-close svg { width: 7px; height: 7px; }

.side { flex: none; width: 28px; padding: 1px 0 0 4px; }
.side-bar { display: flex; flex-direction: column; align-items: center; gap: 6px; height: 316px; border: 1px solid #b0b0b0; border-right: 0; padding: 1px 1px 0 0; }
.grip-h { flex: none; width: 14px; height: 3px; background: repeating-linear-gradient(90deg, #999 0 1px, transparent 1px 2px); }

.layout-tabs { height: 25px; font-size: 11px; }
.model { width: 62px; height: 25px; background: #f5f5f5; clip-path: polygon(12px 0, 100% 0, calc(100% - 10px) 100%, 0 100%); color: #222; }
.sheet-tab { width: 66px; }

.status { display: flex; gap: 3px; padding: 5px 0 2px 5px; }
.command { flex: 1; background: #f4f4f4; }
.segment { flex: none; display: flex; height: 24px; background: #f4f4f4; color: #222; }
.segment button { display: flex; align-items: center; justify-content: center; font-size: 11px; }
.segment span { display: flex; align-items: center; justify-content: center; }
.segment .on { width: 22px; height: 23px; border: 1px solid #4a6d95; background: #cde5fc; }
</style>
